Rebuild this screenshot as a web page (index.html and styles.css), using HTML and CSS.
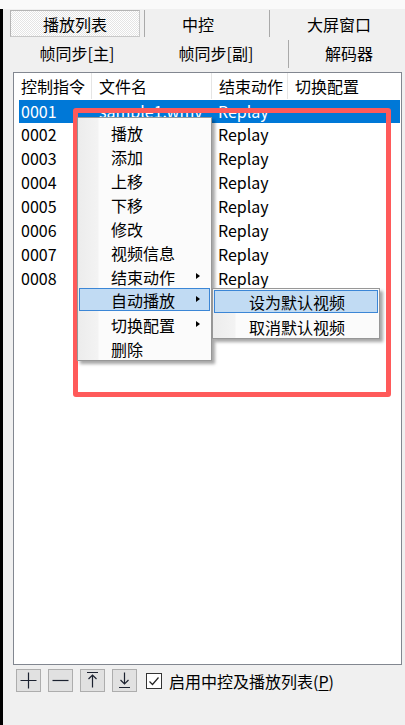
FILE: index.html
```html
<!DOCTYPE html>
<html lang="zh">
<head>
<meta charset="utf-8">
<link rel="stylesheet" href="styles.css">
</head>
<body>
<div class="topstrip"></div>
<div class="window">
  <div class="tabrow row1">
    <div class="tab tab-a selected">播放列表</div>
    <div class="tab tab-b sep">中控</div>
    <div class="tab tab-c sep">大屏窗口</div>
  </div>
  <div class="tabrow row2">
    <div class="tab t2-a">帧同步[主]</div>
    <div class="tab t2-b">帧同步[副]</div>
    <div class="tab t2-c sep2">解码器</div>
  </div>
  <div class="list">
    <div class="head">
      <div class="hc c1">控制指令</div>
      <div class="hc c2">文件名</div>
      <div class="hc c3">结束动作</div>
      <div class="hc c4">切换配置</div>
    </div>
    <div class="rows">
      <div class="row sel"><span class="c1">0001</span><span class="c2">sample1.wmv</span><span class="c3">Replay</span><span class="c4"></span></div>
      <div class="row"><span class="c1">0002</span><span class="c2"></span><span class="c3">Replay</span><span class="c4"></span></div>
      <div class="row"><span class="c1">0003</span><span class="c2"></span><span class="c3">Replay</span><span class="c4"></span></div>
      <div class="row"><span class="c1">0004</span><span class="c2"></span><span class="c3">Replay</span><span class="c4"></span></div>
      <div class="row"><span class="c1">0005</span><span class="c2"></span><span class="c3">Replay</span><span class="c4"></span></div>
      <div class="row"><span class="c1">0006</span><span class="c2"></span><span class="c3">Replay</span><span class="c4"></span></div>
      <div class="row"><span class="c1">0007</span><span class="c2"></span><span class="c3">Replay</span><span class="c4"></span></div>
      <div class="row"><span class="c1">0008</span><span class="c2"></span><span class="c3">Replay</span><span class="c4"></span></div>
    </div>
  </div>
  <div class="toolbar">
    <button class="tbtn" aria-label="add">
      <svg width="25" height="23" viewBox="0 0 25 23"><path d="M4.5 11.5H20.5M12.5 3.5V19.5" stroke="#1c2230" stroke-width="1.2" fill="none"/></svg>
    </button>
    <button class="tbtn" aria-label="remove">
      <svg width="25" height="23" viewBox="0 0 25 23"><path d="M4.5 11.5H20.5" stroke="#1c2230" stroke-width="1.2" fill="none"/></svg>
    </button>
    <button class="tbtn" aria-label="top">
      <svg width="25" height="23" viewBox="0 0 25 23"><path d="M7 3.5H18M12.5 6V18.5M8.5 10L12.5 6L16.5 10" stroke="#1c2230" stroke-width="1.2" fill="none"/></svg>
    </button>
    <button class="tbtn" aria-label="bottom">
      <svg width="25" height="23" viewBox="0 0 25 23"><path d="M7 18.5H18M12.5 3.5V15M8.5 11L12.5 15L16.5 11" stroke="#1c2230" stroke-width="1.2" fill="none"/></svg>
    </button>
    <label class="chk">
      <span class="box"><svg width="14" height="14" viewBox="0 0 14 14"><path d="M2.5 7.5L5.5 10.5L11.5 3.5" stroke="#222" stroke-width="1.2" fill="none"/></svg></span>
      <span class="lbl">启用中控及播放列表(<u>P</u>)</span>
    </label>
  </div>
</div>

<div class="redbox"></div>

<div class="menu">
  <div class="mi">播放</div>
  <div class="mi">添加</div>
  <div class="mi">上移</div>
  <div class="mi">下移</div>
  <div class="mi">修改</div>
  <div class="mi">视频信息</div>
  <div class="mi sub">结束动作<span class="arr"></span></div>
  <div class="mi sub hl">自动播放<span class="arr"></span></div>
  <div class="mi sub">切换配置<span class="arr"></span></div>
  <div class="mi">删除</div>
</div>

<div class="submenu">
  <div class="si hl">设为默认视频</div>
  <div class="si">取消默认视频</div>
</div>
</body>
</html>
```

FILE: styles.css
```css
* { box-sizing: border-box; }
html, body {
  margin: 0;
  padding: 0;
}
body {
  width: 405px;
  height: 725px;
  overflow: hidden;
  background: #f0f0f0;
  font-family: "Noto Sans CJK SC", "Noto Sans", sans-serif;
  font-size: 16px;
  color: #000;
  position: relative;
}
.topstrip {
  height: 9px;
  background: #fafafa;
}
.window {
  height: 716px;
  border-left: 3px solid #000;
  display: flex;
  flex-direction: column;
}
.tabrow {
  display: grid;
  align-items: stretch;
}
.row1 {
  height: 28px;
  padding-top: 1px;
  grid-template-columns: 134px 125px 1fr;
  padding-left: 7px;
}
.tab {
  display: flex;
  align-items: center;
  justify-content: center;
  line-height: 20px;
  white-space: nowrap;
  position: relative;
}
.row1 .tab { height: 27px; }
.tab-a.selected {
  width: 130px;
  border: 1px solid #b4b4b4;
  border-right-color: #c8c8c8;
  border-bottom-color: #c8c8c8;
  background: repeating-conic-gradient(#ffffff 0 25%, #e4e4e4 0 50%) 0 0 / 2px 2px;
}
.tab-b { justify-content: flex-start; padding-left: 38px; }
.tab-c { justify-content: flex-start; padding-left: 38px; }
.row1 .sep::before {
  content: "";
  position: absolute;
  left: 0;
  top: 0;
  width: 1px;
  height: 27px;
  background: #a9a9a9;
}
.row2 {
  height: 33px;
  grid-template-columns: 134px 144px 1fr;
  padding-left: 7px;
}
.row2 .tab { height: 33px; padding-bottom: 1px; }
.t2-b { padding-left: 0; }
.t2-c { justify-content: flex-start; padding-left: 37px; }
.sep2::before {
  content: "";
  position: absolute;
  left: 0;
  top: 3px;
  width: 1px;
  height: 28px;
  background: #a9a9a9;
}

.list {
  margin: 2px 0 0 10px;
  width: 389px;
  height: 593px;
  border: 1px solid #828790;
  background: #fff;
  flex: none;
}
.head {
  display: flex;
  height: 26px;
  align-items: center;
  border-bottom: 1px solid #fff;
}
.hc {
  height: 26px;
  line-height: 26px;
  padding-left: 7px;
  border-right: 1px solid #e5e5e5;
  white-space: nowrap;
}
.head .c1 { width: 78px; }
.head .c2 { width: 120px; }
.head .c3 { width: 76px; }
.head .c4 { width: 109px; border-right: none; }

.rows {
  padding: 1px 0 0 5px;
}
.row {
  display: flex;
  height: 24px;
  line-height: 23px;
  width: 381px;
}
.row span { white-space: nowrap; overflow: hidden; }
.row .c1 { width: 73px; padding-left: 2px; }
.row .c2 { width: 120px; padding-left: 7px; }
.row .c3 { width: 76px; padding-left: 6px; }
.row .c4 { flex: 1; }
.row.sel {
  background: #0078d7;
  color: #fff;
  height: 23px;
}

.toolbar {
  display: flex;
  align-items: center;
  margin-top: 3px;
  padding-left: 13px;
  height: 25px;
}
.tbtn {
  width: 25px;
  height: 23px;
  padding: 0;
  margin: 0 7px 0 0;
  background: #e1e1e1;
  border: 1px solid #adadad;
  display: flex;
  align-items: center;
  justify-content: center;
}
.tbtn svg { display: block; margin: -1px; }
.chk {
  display: flex;
  align-items: center;
  margin-left: 2px;
}
.box {
  width: 16px;
  height: 16px;
  border: 1px solid #333;
  background: #fff;
  display: flex;
  align-items: center;
  justify-content: center;
}
.lbl {
  margin-left: 7px;
  line-height: 20px;
  white-space: nowrap;
}
.lbl u { text-underline-offset: 2px; }

/* overlays */
.redbox {
  position: absolute;
  left: 73px;
  top: 108px;
  width: 318px;
  height: 289px;
  border: 5px solid #ff5a5a;
  border-radius: 3px;
}
.menu {
  position: absolute;
  left: 77px;
  top: 117px;
  width: 135px;
  height: 244px;
  border: 1px solid #979797;
  background: linear-gradient(to right, #ececec 0, #f3f3f3 20px, #fbfbfb 21px, #fbfbfb 100%);
  box-shadow: 3px 3px 3px rgba(0, 0, 0, 0.35);
  padding: 2px 1px 0 1px;
}
.mi {
  height: 24px;
  line-height: 24px;
  padding-left: 31px;
  position: relative;
  white-space: nowrap;
  border: 1px solid transparent;
}
.mi.hl, .si.hl {
  background: #c1dbf3;
  border-color: #3b86d6;
  line-height: 22px;
  height: 23px;
}
.mi.hl { margin-bottom: 1px; }
.arr {
  position: absolute;
  left: 116px;
  top: 8px;
  width: 0;
  height: 0;
  border-top: 3.5px solid transparent;
  border-bottom: 3.5px solid transparent;
  border-left: 4px solid #000;
}
.mi.hl .arr { top: 7px; }
.submenu {
  position: absolute;
  left: 212px;
  top: 288px;
  width: 168px;
  height: 51px;
  border: 1px solid #979797;
  background: linear-gradient(to right, #ececec 0, #f3f3f3 22px, #fbfbfb 23px, #fbfbfb 100%);
  box-shadow: 3px 3px 3px rgba(0, 0, 0, 0.35);
  padding: 1px 1px 0 1px;
}
.si {
  height: 24px;
  line-height: 24px;
  padding-left: 34px;
  border: 1px solid transparent;
  white-space: nowrap;
}
.si.hl { margin-bottom: 1px; }
```
